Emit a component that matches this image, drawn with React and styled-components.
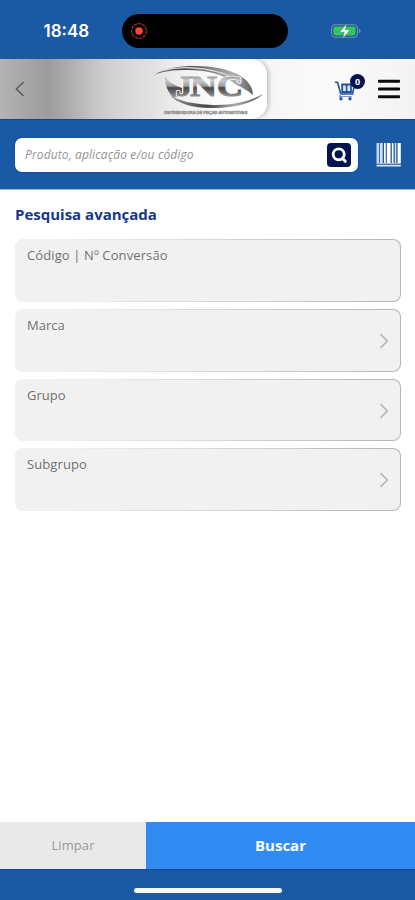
import React from 'react'
import styled, { createGlobalStyle } from 'styled-components'

const GlobalStyle = createGlobalStyle`
  * {
    box-sizing: border-box;
  }
  body {
    margin: 0;
    background: #fff;
    font-family: 'Open Sans', 'Noto Sans', sans-serif;
  }
  button {
    margin: 0;
    padding: 0;
    border: 0;
    background: none;
    font-family: inherit;
  }
  svg {
    display: block;
  }
`

const Screen = styled.div`
  display: flex;
  flex-direction: column;
  width: 415px;
  height: 900px;
  overflow: hidden;
  background: #fff;
`

const StatusBar = styled.div`
  display: grid;
  grid-template-columns: 122px 166px 1fr;
  align-items: center;
  height: 59px;
  padding-top: 3px;
  background: #1a59a3;
`

const Clock = styled.span`
  padding-left: 43.5px;
  color: #fff;
  font-family: Inter, sans-serif;
  font-size: 17px;
  font-weight: 600;
  line-height: 20px;
`

const Island = styled.div`
  height: 34px;
  padding: 8px;
  border-radius: 17px;
  background: #000;
`

const Battery = styled.div`
  padding-left: 43px;
`

const Header = styled.header`
  display: grid;
  grid-template-columns: 150px 117px 1fr;
  align-items: center;
  height: 60px;
  background: linear-gradient(
    90deg,
    #b3b3b3 0,
    #9c9c9c 48px,
    #b0b0b0 72px,
    #cacaca 100px,
    #dedede 140px,
    #f6f6f6 270px,
    #fbfbfb 330px,
    #f3f3f3 415px
  );
`

const BackButton = styled.button`
  width: 40px;
  padding-left: 14px;
`

const LogoCard = styled.div`
  height: 60px;
  border-radius: 0 16px 16px 0;
  background: linear-gradient(90deg, rgba(255, 255, 255, 0) 0, #fff 80px);
  box-shadow: 3px 0 4px -1px rgba(0, 0, 0, 0.22);
  clip-path: inset(0 -8px 0 0);
`

const HeaderActions = styled.div`
  display: flex;
  align-items: center;
  gap: 13px;
  padding-left: 66px;
`

const CartButton = styled.button`
  position: relative;
  width: 32px;
  height: 28px;
  padding: 4px 0 0 1px;
`

const CartBadge = styled.span`
  position: absolute;
  top: -1px;
  right: 0;
  width: 15px;
  height: 15px;
  border-radius: 50%;
  background: #06134f;
  color: #fff;
  font-size: 9px;
  font-weight: 700;
  line-height: 15px;
  text-align: center;
`

const SearchBar = styled.div`
  display: flex;
  align-items: center;
  gap: 18px;
  height: 71px;
  padding: 0 13px 0 15px;
  border-top: 1px solid #134684;
  border-bottom: 1px solid #9dbbe0;
  background: #1a59a3;
`

const SearchField = styled.div`
  display: flex;
  align-items: center;
  justify-content: space-between;
  width: 343px;
  height: 34px;
  padding: 0 7px 0 10px;
  border-radius: 7px;
  background: #fff;
  box-shadow: 0 0 0 1px #144fa5;
`

const Placeholder = styled.span`
  color: #949494;
  font-size: 12px;
  font-style: italic;
  line-height: 16px;
  letter-spacing: 0.12px;
`

const SearchButton = styled.button`
  display: flex;
  align-items: center;
  justify-content: center;
  width: 24px;
  height: 24px;
  border-radius: 4px;
  background: #06134f;
`

const Content = styled.main`
  flex: 1;
  padding: 13px 14px 0 15px;
`

const Title = styled.h1`
  margin: 0 0 14px;
  color: #15388c;
  font-size: 15px;
  font-weight: 700;
  line-height: 22px;
`

const Fields = styled.div`
  display: flex;
  flex-direction: column;
  gap: 7px;
`

// the border fades out towards the left side
const Field = styled.div`
  display: flex;
  justify-content: space-between;
  height: 62.8px;
  padding: 6px 11px 0;
  border: 1px solid transparent;
  border-radius: 8px;
  background:
    linear-gradient(#f1f1f1, #f1f1f1) padding-box,
    linear-gradient(90deg, #f1f1f1 10%, #d5d5d5 55%, #b4b4b4) border-box;
`

const FieldLabel = styled.span`
  color: #717171;
  font-size: 13px;
  line-height: 19px;
  letter-spacing: ${props => props.$spacing || '0'};
`

const FieldArrow = styled.span`
  padding-top: 17px;
`

const Footer = styled.footer`
  display: grid;
  grid-template-columns: 146px 1fr;
  height: 47px;
`

const FooterButton = styled.button`
  padding-bottom: 1px;
  background: ${props => (props.$primary ? '#318bf3' : '#e9e9e9')};
  color: ${props => (props.$primary ? '#fff' : '#999')};
  font-size: ${props => (props.$primary ? '15px' : '13px')};
  font-weight: ${props => (props.$primary ? 700 : 400)};
  letter-spacing: ${props => (props.$primary ? '0' : '0.1px')};
`

const HomeArea = styled.div`
  display: flex;
  justify-content: center;
  height: 31px;
  padding: 18px 0 0 1px;
  border-top: 1px solid #144b97;
  background: #1a59a3;
`

const HomeIndicator = styled.div`
  width: 148px;
  height: 5px;
  border-radius: 3px;
  background: #f4f7fc;
`

const RecordIcon = () => (
  <svg width="18" height="18" viewBox="0 0 18 18">
    <circle cx="9" cy="9" r="7.4" fill="none" stroke="#a83228" strokeWidth="1.2" strokeDasharray="3.4 0.8" />
    <circle cx="9" cy="9" r="3.7" fill="#ff4638" />
  </svg>
)

const BatteryIcon = () => (
  <svg width="31" height="16" viewBox="0 0 31 16">
    <rect x="0.6" y="1.8" width="25.8" height="12.4" rx="4" fill="none" stroke="#7392ad" strokeWidth="1.1" />
    <rect x="2.4" y="3.5" width="22.2" height="9" rx="2.4" fill="#35c759" />
    <path d="M28 5.8v4.4c1-.4 1.7-1.2 1.7-2.2S29 6.2 28 5.8z" fill="#7392ad" />
    <path d="M15.6.8 8.6 9.2h4.6l-1.4 6.3 7.400-8.700h-4.700z" fill="#fff" stroke="#26854f" strokeWidth="0.5" />
  </svg>
)

const BackIcon = () => (
  <svg width="12" height="18" viewBox="0 0 12 18">
    <path d="M9.6 2 2.4 9l7.2 7" fill="none" stroke="#5b5b5b" strokeWidth="1.5" />
  </svg>
)

const logoLetters = [
  { char: 'J', x: 26, width: 16 },
  { char: 'N', x: 40, width: 27 },
  { char: 'C', x: 67, width: 26 },
]

const LogoLetters = () => logoLetters.map(letter => (
  <text key={letter.char} x={letter.x} y="37" textLength={letter.width} lengthAdjust="spacingAndGlyphs">
    {letter.char}
  </text>
))

const Logo = () => (
  <svg width="116" height="60" viewBox="0 0 116 60">
    <defs>
      <linearGradient id="letters" gradientUnits="userSpaceOnUse" x1="0" y1="16" x2="0" y2="38">
        <stop offset="0" stopColor="#8f8f8f" />
        <stop offset="0.25" stopColor="#c9c9c9" />
        <stop offset="0.5" stopColor="#9c9c9c" />
        <stop offset="0.58" stopColor="#484848" />
        <stop offset="0.8" stopColor="#6e6e6e" />
        <stop offset="1" stopColor="#999" />
      </linearGradient>
      <linearGradient id="top" x1="0" y1="0" x2="1" y2="0">
        <stop offset="0" stopColor="#808080" />
        <stop offset="0.3" stopColor="#444" />
        <stop offset="0.55" stopColor="#7d7d7d" />
        <stop offset="0.8" stopColor="#b0b0b0" />
        <stop offset="1" stopColor="#5c5c5c" />
      </linearGradient>
      <linearGradient id="bottom" x1="0" y1="0" x2="1" y2="0">
        <stop offset="0" stopColor="#999" />
        <stop offset="0.4" stopColor="#454545" />
        <stop offset="0.7" stopColor="#aaa" />
        <stop offset="1" stopColor="#555" />
      </linearGradient>
    </defs>
    <path
      d="M3 17C13 9 29 7 46 7c32 0 57 11 57 29-6-5-12-8-18-11C74 15 56 11 38 11c-15 0-27 1-35 6z"
      fill="url(#top)"
    />
    <path d="M10 12C22 9 32 8 44 9c17 1 30 5 40 10" fill="none" stroke="#d9d9d9" strokeWidth="1.3" />
    <path d="M15 18c4 5 9 8 17 11v9h-9c-5-5-8-11-8-20z" fill="url(#letters)" />
    <path
      d="M19 35c8 10 24 14 42 14 24 0 43-5 52-14-10 6-27 11-46 11-21 0-40-4-48-11z"
      fill="url(#bottom)"
    />
    <g fontFamily="Liberation Serif, serif" fontWeight="700" fontSize="30" strokeLinejoin="round">
      <g fill="#f5f5f5" stroke="#f5f5f5" strokeWidth="2.6">
        <LogoLetters />
      </g>
      <g fill="url(#letters)" stroke="url(#letters)" strokeWidth="1">
        <LogoLetters />
      </g>
    </g>
    <text
      x="14"
      y="55"
      fontFamily="Liberation Sans, sans-serif"
      fontWeight="700"
      fontSize="4"
      fill="#6f6f6f"
      stroke="#9a9a9a"
      strokeWidth="0.4"
    >
      DISTRIBUIDORA DE PEÇAS AUTOMOTIVAS
    </text>
  </svg>
)

const CartIcon = () => (
  <svg width="22" height="21" viewBox="0 0 22 21" fill="none" stroke="#2450a0">
    <path d="M.8 1.2h2.700l3.300 11.800h11.700l1.300-6" strokeWidth="1.6" />
    <path d="M8.200 3.500h8.800v7.500H8.200z" fill="#dce9fb" strokeWidth="1.8" />
    <path d="M12.600 3.500V11" strokeWidth="1.6" />
    <path d="M6.800 13l-1.200 2.500h12" stroke="#8198c7" strokeWidth="1.2" />
    <circle cx="7" cy="17.700" r="1" strokeWidth="1.4" />
    <circle cx="16" cy="17.700" r="1" strokeWidth="1.4" />
  </svg>
)

const MenuIcon = () => (
  <svg width="22" height="20" viewBox="0 0 22 20" fill="#0b0b0b">
    <rect y="0.7" width="22" height="3" rx="0.7" />
    <rect y="8.4" width="22" height="3" rx="0.7" />
    <rect y="16.2" width="22" height="3" rx="0.7" />
  </svg>
)

const SearchIcon = () => (
  <svg width="18" height="18" viewBox="0 0 18 18" fill="none" stroke="#fff">
    <circle cx="8.7" cy="8.3" r="5.5" strokeWidth="2.8" />
    <path d="M12.500 12.500l2.800 2.800" strokeWidth="3" strokeLinecap="round" />
  </svg>
)

const BarcodeIcon = () => (
  <svg width="26" height="24" viewBox="0 0 26 24" fill="#fff">
    <rect x="0.5" y="0" width="2.7" height="20" opacity="0.75" />
    <rect x="4" y="0" width="2.7" height="20" opacity="0.8" />
    <rect x="8" y="0" width="1.7" height="20" />
    <rect x="10.8" y="0" width="3.7" height="20" />
    <rect x="15.8" y="0" width="1.7" height="20" />
    <rect x="18.8" y="0" width="1.5" height="20" opacity="0.8" />
    <rect x="21.6" y="0" width="3.2" height="20" />
    <rect x="0.5" y="20" width="24.3" height="1.3" opacity="0.6" />
    <rect x="0.5" y="22" width="24.3" height="1.5" opacity="0.85" />
  </svg>
)

const ArrowIcon = () => (
  <svg width="10" height="16" viewBox="0 0 10 16">
    <path d="M1.5 1.2 8.3 8l-6.800 6.800" fill="none" stroke="#b9b9b9" strokeWidth="1.7" />
  </svg>
)

const fields = [
  { label: 'Código | Nº Conversão', spacing: '0.11px' },
  { label: 'Marca', arrow: true },
  { label: 'Grupo', arrow: true },
  { label: 'Subgrupo', spacing: '0.1px', arrow: true },
]

function App () {
  return (
    <Screen>
      <GlobalStyle />
      <StatusBar>
        <Clock>18:48</Clock>
        <Island><RecordIcon /></Island>
        <Battery><BatteryIcon /></Battery>
      </StatusBar>

      <Header>
        <BackButton><BackIcon /></BackButton>
        <LogoCard><Logo /></LogoCard>
        <HeaderActions>
          <CartButton>
            <CartIcon />
            <CartBadge>0</CartBadge>
          </CartButton>
          <MenuIcon />
        </HeaderActions>
      </Header>

      <SearchBar>
        <SearchField>
          <Placeholder>Produto, aplicação e/ou código</Placeholder>
          <SearchButton><SearchIcon /></SearchButton>
        </SearchField>
        <BarcodeIcon />
      </SearchBar>

      <Content>
        <Title>Pesquisa avançada</Title>
        <Fields>
          {fields.map(field => (
            <Field key={field.label}>
              <FieldLabel $spacing={field.spacing}>{field.label}</FieldLabel>
              {field.arrow && <FieldArrow><ArrowIcon /></FieldArrow>}
            </Field>
          ))}
        </Fields>
      </Content>

      <Footer>
        <FooterButton>Limpar</FooterButton>
        <FooterButton $primary>Buscar</FooterButton>
      </Footer>
      <HomeArea>
        <HomeIndicator />
      </HomeArea>
    </Screen>
  )
}

export default App
